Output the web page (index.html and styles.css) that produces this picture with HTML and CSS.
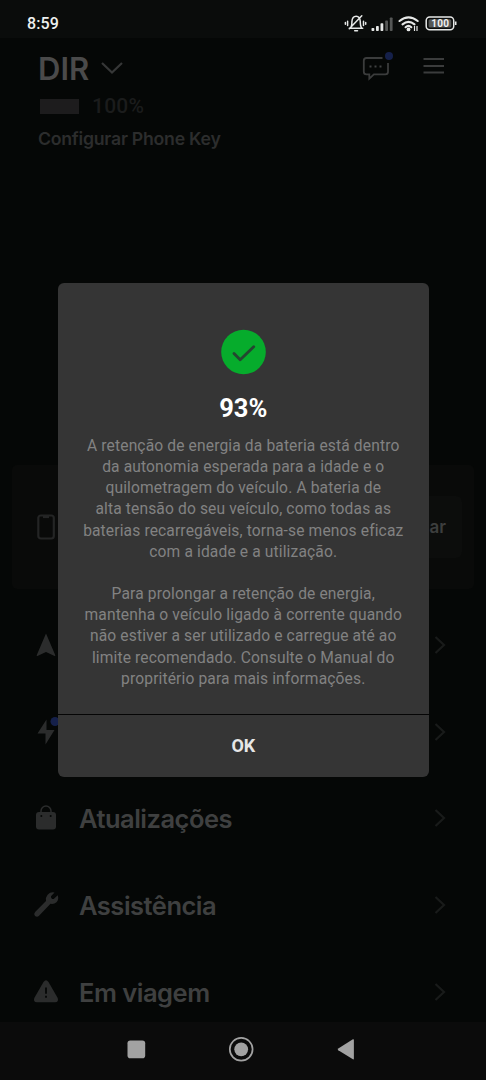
FILE: index.html
```html
<!DOCTYPE html>
<html lang="pt">
<head>
<meta charset="utf-8">
<title>DIR</title>
<link rel="stylesheet" href="styles.css">
</head>
<body>
<div class="screen">
  <header class="status">
    <span class="clock">8:59</span>
    <div class="status-icons">
      <svg width="112" height="20" viewBox="0 0 112 20">
        <g fill="none" stroke="#e6e8e7" stroke-width="1.500" stroke-linecap="round" stroke-linejoin="round">
          <path d="M4.300 15.200h13.400M5.800 14.600c1.300-2 1-3.400 1.100-6 .2-3.200 1.800-5.300 4.200-5.300s4 2.100 4.200 5.300c.1 2.600-.2 4 1.100 6M9.700 17.800h2.800M16.800 2.800L4.300 15.800M2.600 8.200v4.200M.4 9.400v1.800M18.500 8.200v4.200M20.700 9.400v1.800"/>
        </g>
        <g fill="#e6e8e7">
          <rect x="26.500" y="15" width="2.800" height="3" rx=".8"/><rect x="31" y="13" width="2.800" height="5" rx=".8"/><rect x="35.500" y="10.200" width="2.800" height="7.800" rx=".8"/>
          <g fill="#555756"><rect x="40.200" y="7.500" width="2.800" height="10.500" rx=".8"/><rect x="44.800" y="4.500" width="2.800" height="13.500" rx=".8"/></g>
          <circle cx="63.500" cy="16.400" r="1.900"/>
          <path d="M69.500 13v5M72 13v5" stroke="#e6e8e7" stroke-width="1.200"/>
        </g>
        <g fill="none" stroke="#e6e8e7" stroke-width="2.100" stroke-linecap="round">
          <path d="M54.500 8Q63.500.9 72.700 8M57.500 11.400Q63.500 6.400 69.500 11.400M60.600 14.200Q63.500 11.600 66.300 14.200"/>
        </g>
        <rect x="81.200" y="4" width="27.500" height="12.800" rx="3.500" fill="none" stroke="#e6e8e7" stroke-width="1.500"/>
        <rect x="83.600" y="6.300" width="22.700" height="8.200" rx="1.500" fill="#555756"/>
        <path d="M110.700 8.500v3.500" stroke="#e6e8e7" stroke-width="1.600"/>
        <text class="battery-text" x="95.200" y="14.100">100</text>
      </svg>
    </div>
  </header>

  <main class="app">
    <section class="heading">
      <div class="title-row">
        <h1 class="name">DIR</h1>
        <svg class="chevron-down" width="22" height="14" viewBox="0 0 22 14"><path d="M1 2l10 9.500L21 2"/></svg>
        <svg class="chat" width="32" height="30" viewBox="0 0 32 30">
          <path class="line" d="M20.500 7H4.500Q1.800 7 1.800 9.700v11Q1.800 23.400 4.500 23.400h2.800v4.300l4.600-4.300h11.400q2.700 0 2.700-2.700V12"/>
          <path class="dots" d="M7.500 15.500h2M12.500 15.500h2M17.500 15.500h2"/>
          <circle cx="27" cy="5" r="4" fill="#15204a"/>
        </svg>
        <svg class="menu" width="22" height="18" viewBox="0 0 22 18"><path class="line" d="M.5 2h20.500M.5 9h20.500M.5 15.500h20.500"/></svg>
      </div>
      <div class="charge"><span class="charge-bar"></span><span>100%</span></div>
      <p class="phone-key">Configurar Phone Key</p>
    </section>

    <section class="card">
      <svg width="20" height="28" viewBox="0 0 20 28"><rect class="phone" x="2.300" y="2.500" width="15.500" height="23" rx="2.500"/><path class="phone" d="M7 4h6"/></svg>
      <span class="card-button">ar</span>
    </section>

    <nav class="list">
      <div class="row">
        <svg class="icon" width="26" height="28" viewBox="0 0 26 28"><path d="M13 2.500l9.300 21.800q.2.900-.7.700L13 21l-8.600 4q-.9.200-.7-.7z"/></svg>
        <span class="label"></span><svg class="chevron" width="12" height="18" viewBox="0 0 12 18"><path d="M1.500 1L10 9l-8.500 8"/></svg>
      </div>
      <div class="row">
        <svg class="icon" width="26" height="28" viewBox="0 0 26 28"><path d="M13.500 1.500L4.500 15.500h8V26.500L21.500 12h-8z"/><circle cx="22" cy="3.500" r="4.500" fill="#15204a"/></svg>
        <span class="label"></span><svg class="chevron" width="12" height="18" viewBox="0 0 12 18"><path d="M1.500 1L10 9l-8.500 8"/></svg>
      </div>
      <div class="row">
        <svg class="icon" width="26" height="28" viewBox="0 0 26 28"><rect x="3" y="8" width="20" height="17.500" rx="3"/><path d="M8 12V7a5 5 0 0 1 10 0V12" fill="none" stroke="#2b2c2c" stroke-width="1.500"/><circle cx="8.300" cy="12" r="1" fill="#050706"/><circle cx="17.700" cy="12" r="1" fill="#050706"/></svg>
        <span class="label">Atualizações</span><svg class="chevron" width="12" height="18" viewBox="0 0 12 18"><path d="M1.500 1L10 9l-8.500 8"/></svg>
      </div>
      <div class="row">
        <svg class="icon" width="26" height="28" viewBox="0 0 26 28"><path d="M21.500 1.500L18 5.200q-.3 3 2.700 2.800l4-3.800q1.500 4-1.200 7-2.300 2.200-6 1.600L5.800 25q-1.800 1.500-3.800-.1-1.700-1.900.1-3.800L13 10.100q-.7-3.700 1.600-6.400 3-3.200 6.900-2.200z"/></svg>
        <span class="label">Assistência</span><svg class="chevron" width="12" height="18" viewBox="0 0 12 18"><path d="M1.500 1L10 9l-8.500 8"/></svg>
      </div>
      <div class="row">
        <svg class="icon" width="26" height="28" viewBox="0 0 26 28"><path d="M10.500 4q2.500-3.400 5 0l9.200 16q1.300 4-2.500 4.300H3.800Q0 24 1.300 20z"/><path d="M13 9.500v6.300M13 17.800v2" stroke="#050706" stroke-width="1.800"/></svg>
        <span class="label">Em viagem</span><svg class="chevron" width="12" height="18" viewBox="0 0 12 18"><path d="M1.500 1L10 9l-8.500 8"/></svg>
      </div>
    </nav>
  </main>

  <footer class="navbar">
    <svg width="486" height="58" viewBox="0 0 486 58" fill="#a2a2a2">
      <rect x="127.500" y="18.500" width="17.700" height="17.700" rx="2.800"/>
      <circle cx="241.200" cy="27.300" r="11.400" fill="none" stroke="#a2a2a2" stroke-width="1.700"/>
      <circle cx="241.200" cy="27.300" r="6.900"/>
      <path d="M353.900 18v18.600q0 1.200-1 .7l-14.600-9q-1.200-.9 0-1.800l14.600-9.200q1-.5 1 .7z"/>
    </svg>
  </footer>

  <div class="dialog" role="dialog">
    <div class="dialog-body">
      <svg width="45" height="45" viewBox="0 0 45 45"><circle cx="22.500" cy="22" r="22.300" fill="#06ac2c"/><path d="M13 23.500l6.200 6.200L32.700 16.800" fill="none" stroke="#244630" stroke-width="2.900" stroke-linecap="round" stroke-linejoin="round"/></svg>
      <h2 class="percent">93%</h2>
      <p class="text">A retenção de energia da bateria está dentro<br>da autonomia esperada para a idade e o<br>quilometragem do veículo. A bateria de<br>alta tensão do seu veículo, como todas as<br>baterias recarregáveis, torna-se menos eficaz<br>com a idade e a utilização.</p>
      <p class="text">Para prolongar a retenção de energia,<br>mantenha o veículo ligado à corrente quando<br>não estiver a ser utilizado e carregue até ao<br>limite recomendado. Consulte o Manual do<br>propritério para mais informações.</p>
    </div>
    <div class="dialog-action"><span class="ok">OK</span></div>
  </div>
</div>
</body>
</html>
```
FILE: styles.css
```css
* { box-sizing: border-box; margin: 0; padding: 0; }
body { background: #050706; font-family: Roboto, sans-serif; }
svg { display: block; flex: none; overflow: visible; }
.screen { position: relative; width: 486px; height: 1080px; overflow: hidden; display: flex; flex-direction: column; }
.status { height: 38px; background: #0a0c0b; display: flex; justify-content: space-between; padding: 13px 29px 0 27px; }
.clock { font-size: 16px; font-weight: 500; line-height: 22px; color: #eef0ef; letter-spacing: .1px; }
.battery-text { font: 700 10px Roboto, sans-serif; fill: #f0f0f0; text-anchor: middle; letter-spacing: .3px; }
.app { height: 984px; font-family: Inter, sans-serif; }
.heading { height: 427px; padding: 13px 41px 0 38px; }
.title-row { display: flex; height: 36px; }
.name { font-size: 31px; line-height: 36px; font-weight: 600; color: #4a4a4a; width: 63px; letter-spacing: 0; }
.chevron-down { margin-top: 10px; fill: none; stroke: #363737; stroke-width: 2.200; }
.chat { margin-left: 239px; }
.menu { margin: 6px 0 0 auto; }
.line { fill: none; stroke: #3b3c3c; stroke-width: 1.800; }
.phone { fill: none; stroke: #242525; stroke-width: 2.200; }
.dots { stroke: #414242; stroke-width: 2; }
.charge { display: flex; align-items: center; gap: 13px; height: 38px; padding-left: 2px; color: #1b1c1c; font: 500 21px/38px Roboto, sans-serif; letter-spacing: .2px; }
.charge-bar { width: 39px; height: 15px; background: #1d1c1d; }
.phone-key { color: #2c2d2d; font-size: 17.700px; line-height: 28px; font-weight: 600; letter-spacing: -.25px; }
.card { margin: 0 12px; height: 124px; border-radius: 5px; background: #090a09; display: flex; align-items: center; justify-content: space-between; padding: 0 12px 0 24px; }
.card-button { background: #0c0d0c; border-radius: 6px; padding: 1px 16px 0 72px; line-height: 61px; font-size: 17px; font-weight: 600; color: #3d3e3e; }
.list { padding: 12.500px 40px 0 33px; }
.row { height: 86.800px; display: flex; align-items: center; }
.icon { fill: #2b2c2c; }
.label { flex: 1; padding-left: 20px; font-size: 25.500px; font-weight: 600; color: #3f4040; letter-spacing: -.5px; }
.chevron { fill: none; stroke: #191b1a; stroke-width: 2.200; }
.navbar { height: 58px; background: #0b0b0b; }
.dialog { position: absolute; left: 57.500px; top: 282.500px; width: 371.500px; height: 494.500px; border-radius: 6px; background: #353535; display: flex; flex-direction: column; text-align: center; }
.dialog-body { height: 431px; padding-top: 47.500px; display: flex; flex-direction: column; align-items: center; }
.percent { margin-top: 16px; height: 45px; font-size: 25.500px; line-height: 34px; font-weight: 700; color: #fff; }
.text { font-size: 15.600px; line-height: 21.150px; color: #828282; letter-spacing: .13px; margin-bottom: 21.150px; white-space: nowrap; }
.dialog-action { flex: 1; border-top: 1.500px solid #050505; padding-top: 21.500px; }
.ok { display: block; height: 16px; overflow: hidden; font-size: 18px; line-height: 20px; font-weight: 700; color: #e6e6e6; letter-spacing: -.1px; }
```
